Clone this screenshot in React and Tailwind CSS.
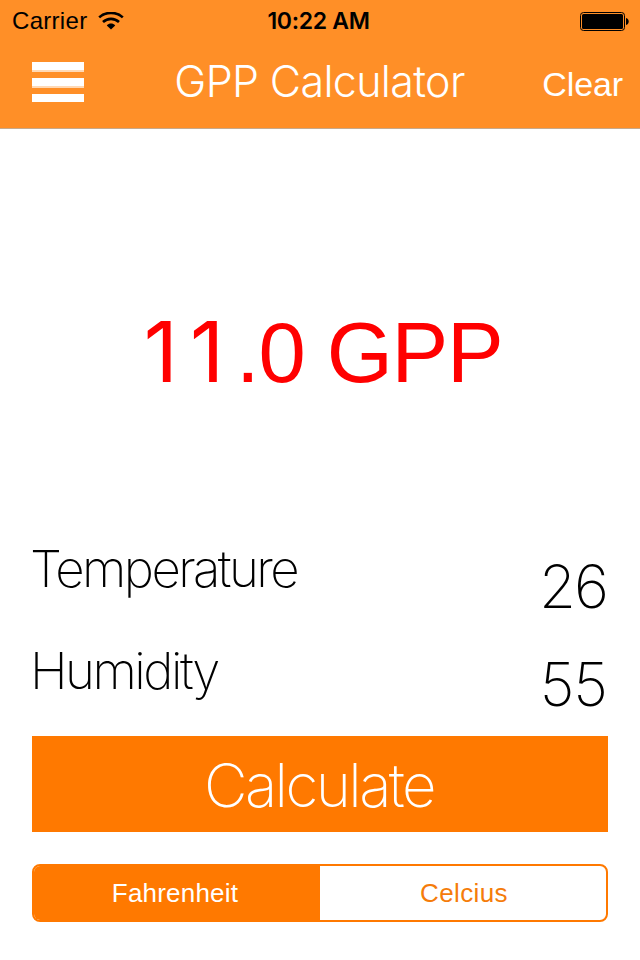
const READINGS = [
  { id: 'temperature', label: 'Temperature', value: '26', row: 'h-[102px]', labelSpacing: 'tracking-[-2.6px]', offset: 'mt-[14px]', valueSpacing: 'tracking-[-2px]' },
  { id: 'humidity', label: 'Humidity', value: '55', row: 'h-[98px]', labelSpacing: 'tracking-[-2.5px]', offset: 'mt-[10px]', valueSpacing: 'tracking-[-1px]' },
];

function WifiIcon() {
  return (
    <svg width="26" height="18" viewBox="0 0 26 18" fill="none" stroke="#000" strokeWidth="2.6">
      <path d="M1.2 5.4C7.7-.6 18.3-.6 24.8 5.4" />
      <path d="M5 10C9.5 5.8 16.5 5.8 21 10" />
      <path d="M8.8 13.4C11.2 11 14.8 11 17.2 13.4L13 17.6Z" fill="#000" stroke="none" />
    </svg>
  );
}

function BatteryIcon() {
  return (
    <svg width="49" height="19" viewBox="0 0 49 19">
      <rect x="0.5" y="0.5" width="44" height="18" rx="3" fill="none" stroke="#000" />
      <rect x="2" y="2" width="41" height="15" rx="1.5" />
      <path d="M46 6c3.6.6 3.6 6.4 0 7z" />
    </svg>
  );
}

function StatusBar() {
  return (
    <div className="grid h-[41px] grid-cols-3 items-center pl-3 pr-[11px] text-[24px] leading-[42px] text-black">
      <div className="flex items-center gap-[11px]">
        <span className="tracking-[0.3px]">Carrier</span>
        <WifiIcon />
      </div>
      <span className="whitespace-nowrap pr-1 text-center font-['Inter'] text-[23px] font-semibold tracking-[-0.3px]">10:22 AM</span>
      <div className="flex justify-end">
        <BatteryIcon />
      </div>
    </div>
  );
}

function MenuButton() {
  return (
    <button type="button" aria-label="Menu" className="flex w-[52px] flex-col gap-1.5">
      <span className="h-2.5 border-b-2 border-[#ffd9b5] bg-white" />
      <span className="h-2.5 border-b-2 border-[#ffd9b5] bg-white" />
      <span className="h-2 bg-white" />
    </button>
  );
}

export default function App() {
  return (
    <div className="h-[960px] w-[640px] overflow-hidden bg-white font-['Liberation_Sans',sans-serif] text-black">
      <header className="h-[129px] border-b border-[#c6a98c] bg-[#ff8f27]">
        <StatusBar />
        <div className="grid h-[82px] grid-cols-[120px_1fr_120px] items-center pl-8 pr-[17px] text-white">
          <MenuButton />
          <h1 className="-ml-4 whitespace-nowrap pb-0.5 text-center font-['Inter'] text-[43px] font-light leading-[76px] tracking-[-0.65px]">
            GPP Calculator
          </h1>
          <button type="button" className="pt-1 text-right text-[34px] leading-[76px] tracking-[-0.1px]">Clear</button>
        </div>
      </header>

      <main className="px-8">
        <p className="mt-[174px] h-[100px] whitespace-nowrap pl-1.5 text-center text-[85px] leading-[100px] tracking-[-1.3px] text-[#ff0000]">
          <span className="font-['Inter'] text-[84px] leading-[90px] tracking-[12px]">11</span>
          .0 GPP
        </p>

        <div className="mt-[133px] font-['Inter'] font-extralight">
          {READINGS.map((item) => (
            <div key={item.id} className={`flex items-start justify-between ${item.row}`}>
              <span className={`-ml-0.5 mt-px text-[51px] leading-[64px] ${item.labelSpacing}`}>{item.label}</span>
              <span className={`pr-px text-[60px] leading-[72px] ${item.valueSpacing} ${item.offset}`}>{item.value}</span>
            </div>
          ))}
        </div>

        <button
          type="button"
          className="flex h-24 w-full items-center justify-center bg-[#ff7900] pr-0.5 pt-0.5 font-['Inter'] text-[60px] font-extralight leading-[90px] tracking-[-2.6px] text-white"
        >
          Calculate
        </button>

        <div className="mt-8 grid h-[58px] grid-cols-2 overflow-hidden rounded-lg border-2 border-[#ff7900] bg-white text-[26px] leading-[54px]">
          <button type="button" className="bg-[#ff7900] pr-1 tracking-[0.2px] text-white">Fahrenheit</button>
          <button type="button" className="pl-0.5 tracking-[0.4px] text-[#f57c0a]">Celcius</button>
        </div>
      </main>
    </div>
  );
}
